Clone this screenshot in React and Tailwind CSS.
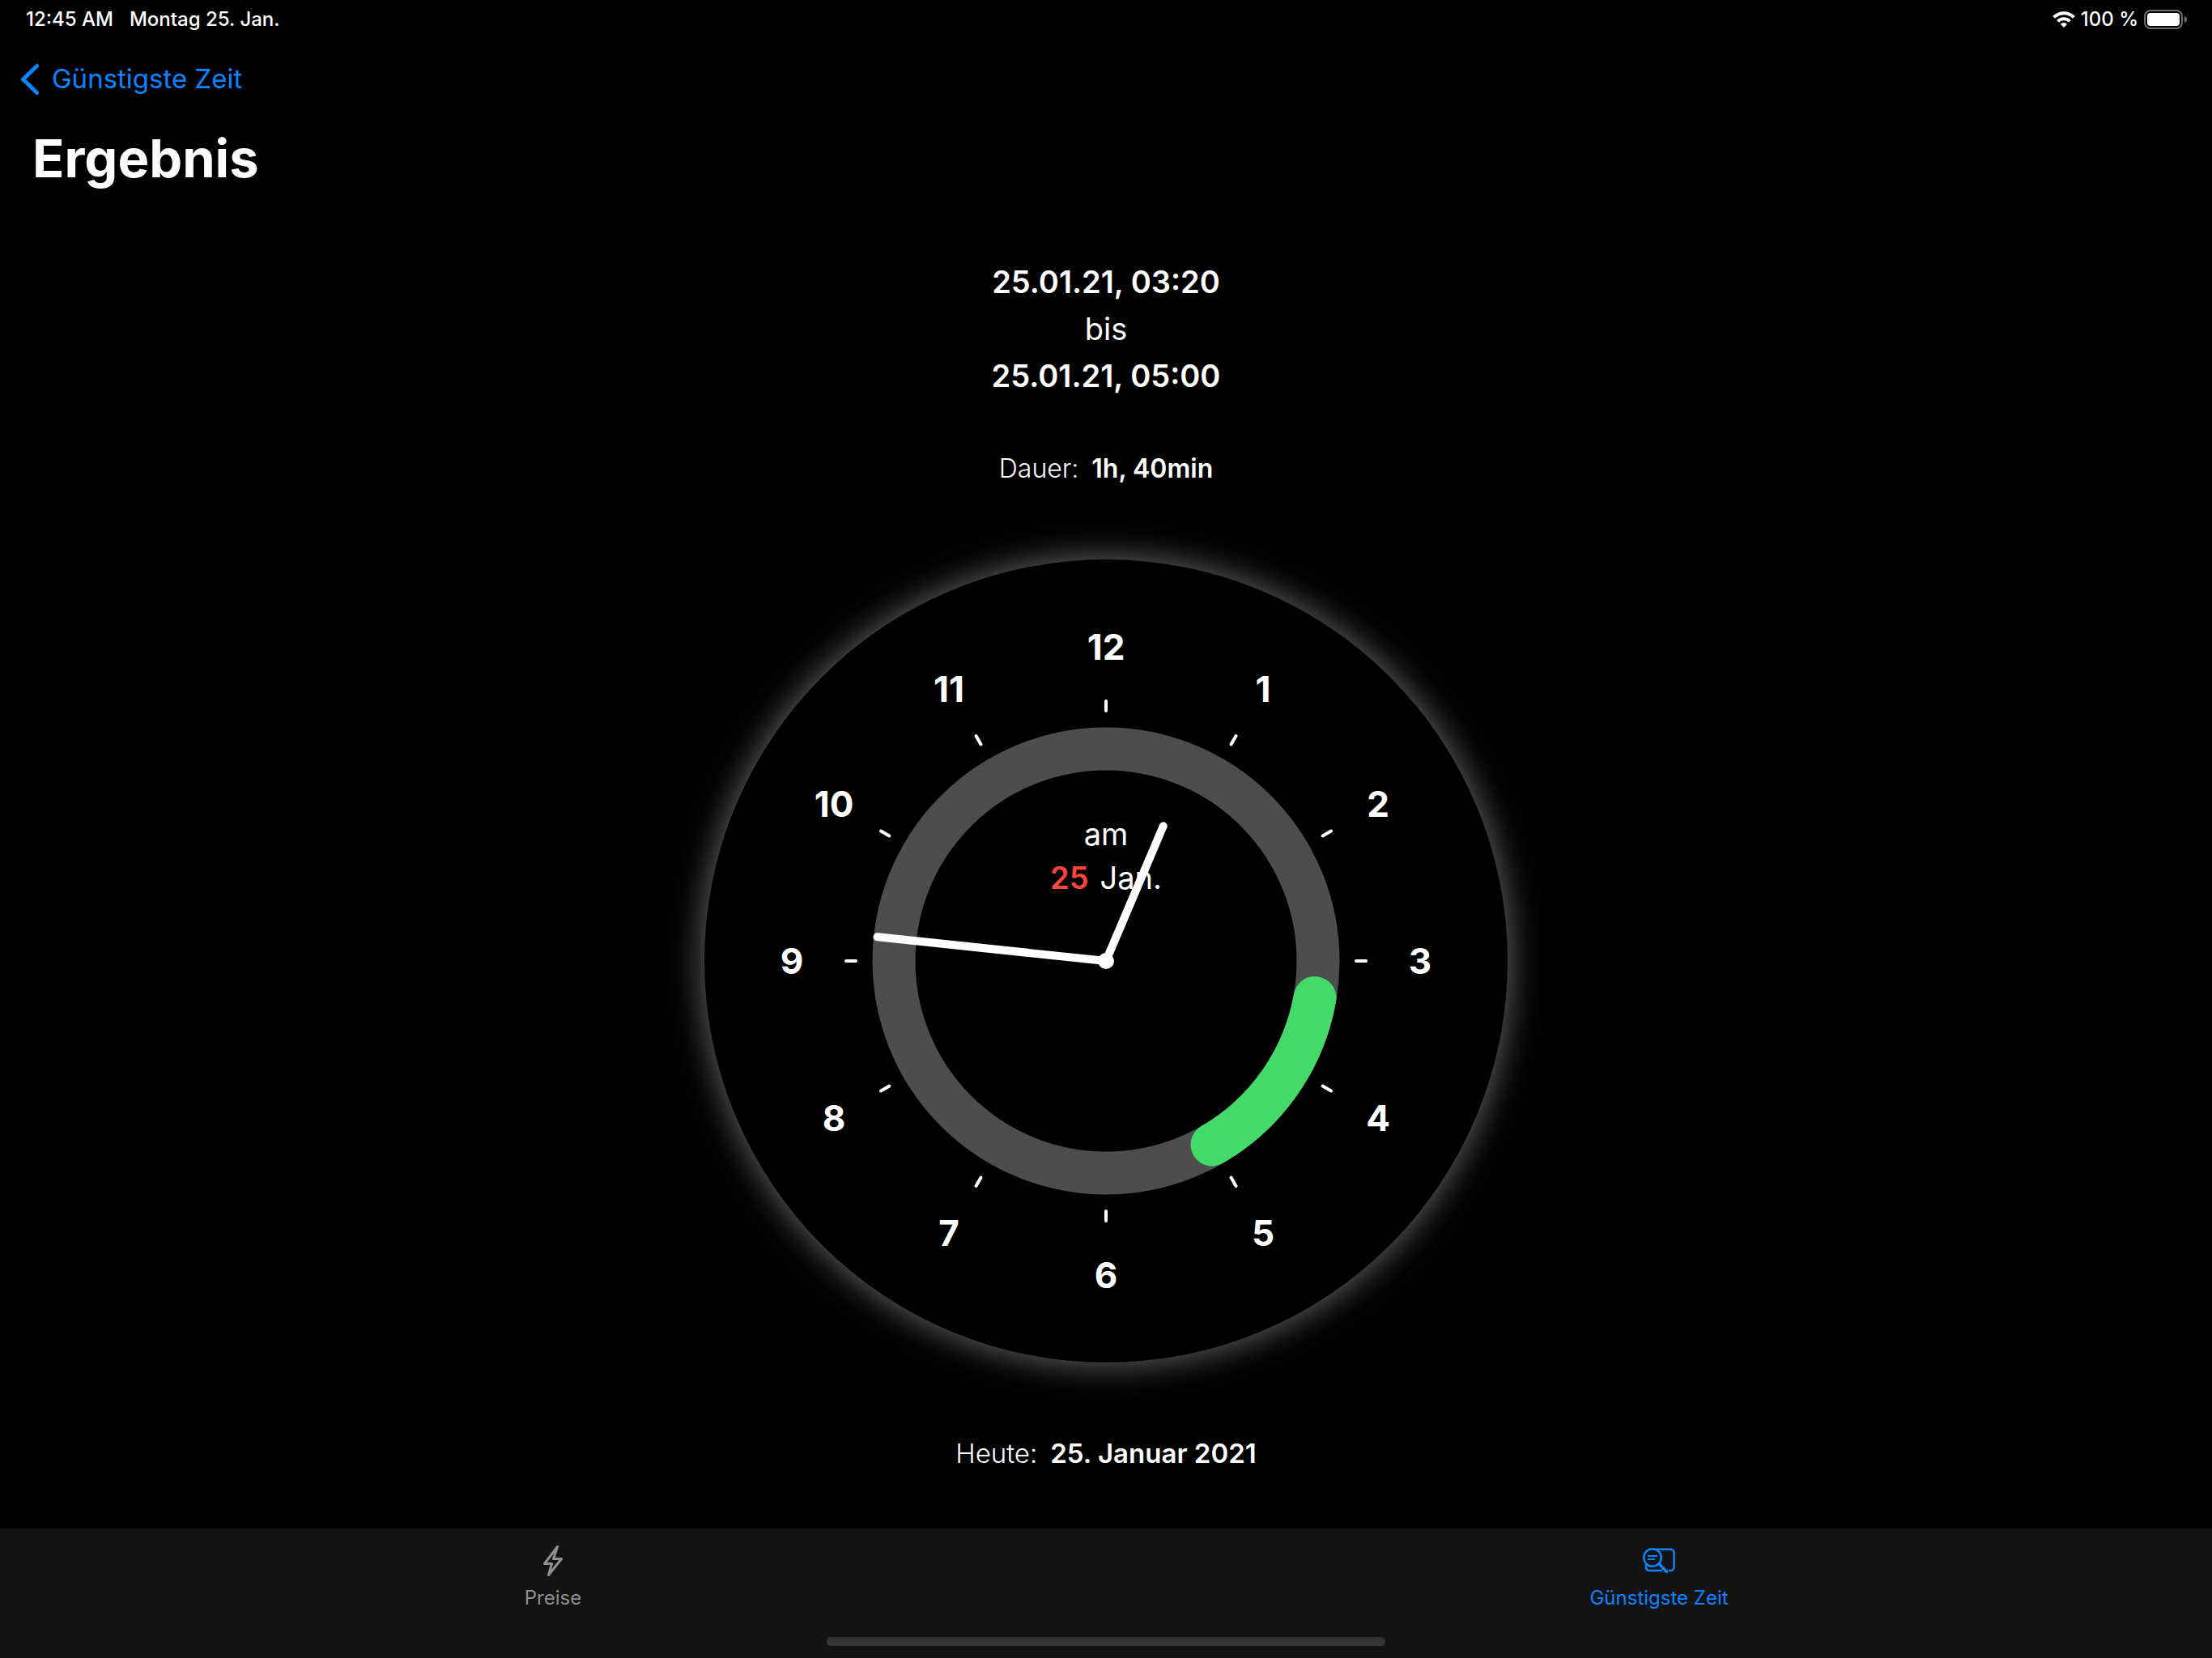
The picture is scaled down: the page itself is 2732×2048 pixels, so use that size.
const CENTER = 500;

function polar(radius, degrees) {
  const a = ((degrees - 90) * Math.PI) / 180;
  return [CENTER + radius * Math.cos(a), CENTER + radius * Math.sin(a)];
}

function Hand({ length, angle }) {
  const [x, y] = polar(length, angle);
  return <line x1={CENTER} y1={CENTER} x2={x} y2={y} stroke="#fff" strokeWidth="10" strokeLinecap="round" />;
}

function Clock({ hour, minute, start, end }) {
  const hours = Array.from({ length: 12 }, (_, i) => i + 1);
  const [sx, sy] = polar(262, start * 30);
  const [ex, ey] = polar(262, end * 30);
  return (
    <div className="size-[992px] rounded-full bg-black shadow-[0_0_44px_rgba(255,255,255,0.44)]">
      <svg viewBox="4 4 992 992" className="size-full" role="img" aria-label="Uhr">
        <circle cx={CENTER} cy={CENTER} r="262" fill="none" stroke="#4d4d4d" strokeWidth="53" />
        <path d={`M${sx} ${sy}A262 262 0 0 1 ${ex} ${ey}`} fill="none" stroke="#43da6a" strokeWidth="53" strokeLinecap="round" />
        {hours.map((h) => {
          const [x1, y1] = polar(309, h * 30);
          const [x2, y2] = polar(321, h * 30);
          return <line key={h} x1={x1} y1={y1} x2={x2} y2={y2} stroke="#fff" strokeWidth="4" strokeLinecap="round" />;
        })}
        {hours.map((h) => {
          const [x, y] = polar(388, h * 30);
          return (
            <text key={h} x={x} y={y + 16} textAnchor="middle" className="fill-white text-[44px] font-bold">
              {h}
            </text>
          );
        })}
        <text x={CENTER} y="357" textAnchor="middle" className="fill-white text-[38px] font-normal">am</text>
        <text x={CENTER} y="411" textAnchor="middle" className="fill-white text-[38px] font-normal">
          <tspan className="fill-[#ff453a] font-semibold">25</tspan>
          <tspan dx="14">Jan.</tspan>
        </text>
        <Hand length={181} angle={(hour + minute / 60) * 30} />
        <Hand length={284} angle={minute * 6} />
        <circle cx={CENTER} cy={CENTER} r="10" fill="#fff" />
      </svg>
    </div>
  );
}

function StatusBar() {
  return (
    <div className="flex h-12 items-center justify-between pl-8 pr-[30px] text-[24px] font-medium">
      <div className="flex gap-5">
        <span>12:45 AM</span>
        <span>Montag 25. Jan.</span>
      </div>
      <div className="flex items-center gap-[7px]">
        <svg viewBox="0 0 28 20" className="h-5 w-7" fill="none" stroke="#fff" strokeWidth="4">
          <path d="M1.6 7.4a17.6 17.6 0 0 1 24.8 0" />
          <path d="M6.6 12.4a10.5 10.5 0 0 1 14.8 0" />
          <path d="M14 20l-4.2-4.2a5.9 5.9 0 0 1 8.4 0z" fill="#fff" stroke="none" />
        </svg>
        <span>100 %</span>
        <svg viewBox="0 0 54 24" className="h-6 w-[54px]">
          <rect x="1" y="1" width="46" height="22" rx="7" fill="none" stroke="#6b6b6b" strokeWidth="2" />
          <rect x="4" y="4" width="40" height="16" rx="4" fill="#fff" />
          <path d="M50 8c4 1 4 7 0 8z" fill="#6b6b6b" />
        </svg>
      </div>
    </div>
  );
}

function Tab({ label, active, children }) {
  return (
    <button
      type="button"
      className={`flex flex-col items-center pt-5 text-[24px] leading-7 ${active ? "text-[#0a84ff]" : "text-[#8f8f8f]"}`}
    >
      {children}
      <span className="mt-3">{label}</span>
    </button>
  );
}

export default function App() {
  return (
    <div className="flex min-h-screen flex-col bg-black font-['Inter',sans-serif] text-white">
      <StatusBar />
      <header className="px-6">
        <a href="#" className="flex h-[100px] w-fit items-center gap-4 text-[33px] text-[#0a84ff]">
          <svg viewBox="0 0 24 40" className="h-10 w-6" fill="none" stroke="currentColor" strokeWidth="5" strokeLinecap="round" strokeLinejoin="round">
            <path d="M21.500 3.500L4.500 20l17 16.500" />
          </svg>
          Günstigste Zeit
        </a>
        <h1 className="pl-4 text-[65px] font-bold leading-24">Ergebnis</h1>
      </header>

      <main className="flex flex-1 flex-col items-center pt-[75px]">
        <div className="text-center text-[38px] leading-[58px]">
          <p className="font-semibold">25.01.21, 03:20</p>
          <p>bis</p>
          <p className="font-semibold">25.01.21, 05:00</p>
        </div>
        <p className="mt-[62px] flex gap-4 text-[32px] leading-12">
          <span className="font-light">Dauer:</span>
          <span className="font-semibold">1h, 40min</span>
        </p>
        <div className="mt-[88px]">
          <Clock hour={0} minute={46} start={3 + 20 / 60} end={5} />
        </div>
        <p className="mt-[88px] flex gap-4 text-[33px] leading-12">
          <span className="font-light">Heute:</span>
          <span className="font-semibold">25. Januar 2021</span>
        </p>
      </main>

      <footer className="flex h-40 flex-col justify-between bg-[#131313] pb-[15px]">
        <nav className="grid grid-cols-2">
          <Tab label="Preise">
            <svg viewBox="0 0 24 40" className="h-10 w-6" fill="none" stroke="currentColor" strokeWidth="3" strokeLinejoin="round">
              <path d="M17.500 2.500L1.500 23.500H10.500L6.500 37.500L22.500 17.500H12.500z" />
            </svg>
          </Tab>
          <Tab label="Günstigste Zeit" active>
            <svg viewBox="0 0 40 40" className="size-10" fill="none" stroke="currentColor" strokeWidth="2.500">
              <circle cx="12" cy="16" r="10.800" />
              <path d="M20 23.500L29.500 33.500" strokeWidth="3.500" strokeLinecap="round" />
              <path d="M6 14h12M6 18h9" strokeWidth="2" />
              <path d="M17 5.800H34.500a4 4 0 0 1 4 4V28a4 4 0 0 1-4 4H32M24 32H8a4 4 0 0 1-4-4V24" />
            </svg>
          </Tab>
        </nav>
        <div className="h-[11px] w-[690px] self-center rounded-full bg-linear-to-b from-[#2f2f2f] to-[#393939]" />
      </footer>
    </div>
  );
}
